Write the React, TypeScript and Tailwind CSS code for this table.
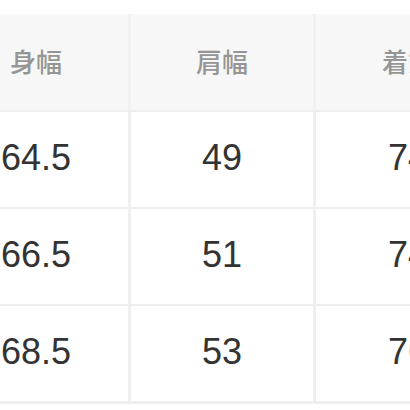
import React from "react";

const headers = ["身幅", "肩幅", "着丈"];
const rows = [
  ["64.5", "49", "74"],
  ["66.5", "51", "74"],
  ["68.5", "53", "76"],
];

export default function App() {
  return (
    <div className="w-[410px] h-[410px] overflow-hidden bg-white pt-[14px]">
      <div className="ml-[-56px] w-[560px] flex flex-col">
        <div className="grid grid-cols-[184px_182px_184px] gap-x-[3px] bg-[#f1f1f1] h-[96px]">
          {headers.map((h) => (
            <div
              key={h}
              className="bg-[#f7f7f7] flex items-center justify-center text-[26px] font-medium text-[#959595] pb-[4px]"
              style={{ fontFamily: '"Noto Sans CJK JP", "Noto Sans", sans-serif' }}
            >
              {h}
            </div>
          ))}
        </div>
        {rows.map((r, i) => (
          <div key={i} className="flex flex-col">
            <div className="h-[2px] bg-[#eeeeee]" />
            <div className="grid grid-cols-[184px_182px_184px] gap-x-[3px] bg-[#efefef] h-[95px]">
              {r.map((c, j) => (
                <div
                  key={j}
                  className="bg-white flex items-center justify-center text-[36px] text-[#333333] pb-[3px]"
                  style={{ fontFamily: '"Liberation Sans", Arial, sans-serif' }}
                >
                  {c}
                </div>
              ))}
            </div>
          </div>
        ))}
        <div className="h-[3px] bg-[#eeeeee]" />
      </div>
    </div>
  );
}
